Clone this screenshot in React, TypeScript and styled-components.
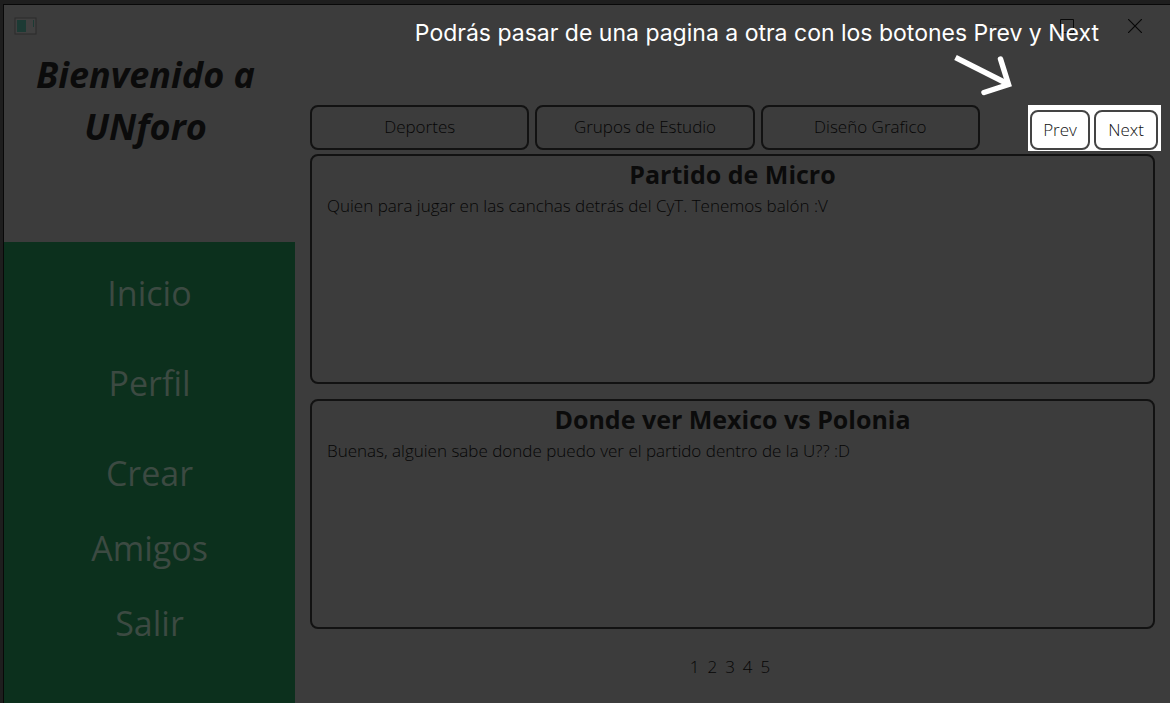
import React from "react";
import styled, { createGlobalStyle } from "styled-components";

const color = {
  frame: "#1e1e1e",
  edge: "#080808",
  window: "#3c3c3c",
  green: "#0c301d",
  line: "#121212",
  text: "#060606",
  title: "#0b0b0b",
  navText: "#3c4a42",
};

const GlobalStyle = createGlobalStyle`
  * { box-sizing: border-box; }
  body {
    margin: 0;
    background: ${color.frame};
    color: ${color.text};
    font-family: "Open Sans", "Noto Sans", sans-serif;
    font-size: 17px;
    font-weight: 300;
  }
  button { font: inherit; color: inherit; cursor: pointer; }
  h1, h2, p, ul, ol { margin: 0; padding: 0; }
  ul, ol { list-style: none; }
`;

const Page = styled.div`
  position: relative;
  display: flex;
  min-height: 100vh;
  padding: 4px 0 0 3px;
`;

const Window = styled.div`
  flex: 1;
  display: flex;
  flex-direction: column;
  background: ${color.window};
  border-top: 1px solid ${color.edge};
  border-left: 1px solid ${color.edge};
`;

const TitleBar = styled.header`
  display: flex;
  justify-content: space-between;
  align-items: center;
  height: 42px;
  padding: 0 28px 0 10px;
`;

const Controls = styled.div`
  display: flex;
  gap: 54px;
`;

const ControlButton = styled.button`
  display: flex;
  padding: 0;
  border: 0;
  background: none;
`;

const Content = styled.div`
  flex: 1;
  display: grid;
  grid-template-columns: 291px 1fr;
`;

const Sidebar = styled.aside`
  display: flex;
  flex-direction: column;
`;

const Welcome = styled.h1`
  height: 195px;
  padding: 2px 38px 0 30px;
  font-size: 36px;
  line-height: 52px;
  font-style: italic;
  font-weight: 700;
  text-align: center;
  color: ${color.title};
`;

const Nav = styled.nav`
  flex: 1;
  display: flex;
  flex-direction: column;
  gap: 38px;
  padding: 25px 0;
  background: ${color.green};
`;

const NavGroup = styled.ul<{ $gap: number }>`
  display: flex;
  flex-direction: column;
  align-items: center;
  gap: ${(p) => p.$gap}px;
`;

const NavLink = styled.a`
  display: block;
  font-size: 34px;
  font-weight: 400;
  line-height: 52px;
  color: ${color.navText};
  text-decoration: none;
`;

const Main = styled.main`
  display: flex;
  flex-direction: column;
  padding: 58px 15px 20px;
`;

const Toolbar = styled.div`
  display: flex;
  gap: 48px;
  margin-right: -6px;
`;

const Topics = styled.div`
  flex: 1;
  display: flex;
  gap: 6px;
  height: 45px;
`;

const OutlineButton = styled.button`
  padding: 0 0 2px;
  background: none;
  border: 2px solid ${color.line};
  border-radius: 8px;
`;

const TopicButton = styled(OutlineButton)`
  flex: 1;
`;

const Pager = styled.div`
  display: flex;
  gap: 4px;
  height: 46px;
  padding: 5px 3px 1px 2px;
  background: #fff;
  color: #111;
`;

const PagerButton = styled(OutlineButton)<{ $width: number }>`
  width: ${(p) => p.$width}px;
  border-color: #444;
`;

const Posts = styled.div`
  display: flex;
  flex-direction: column;
  gap: 15px;
  margin-top: 3px;
`;

const Post = styled.article`
  min-height: 230px;
  padding: 0 15px;
  border: 2px solid ${color.line};
  border-radius: 8px;
`;

const PostTitle = styled.h2`
  font-size: 25px;
  line-height: 36px;
  font-weight: 700;
  text-align: center;
  color: ${color.title};
`;

const PostText = styled.p`
  line-height: 28px;
`;

const PageNumbers = styled.ol`
  display: flex;
  justify-content: center;
  gap: 8px;
  margin-top: 25px;
  padding-right: 5px;
  line-height: 26px;
`;

const Callout = styled.div`
  position: absolute;
  top: 18px;
  right: 71px;
  display: flex;
  flex-direction: column;
  align-items: flex-end;
  gap: 5px;
  color: #fff;
  font-family: Inter, sans-serif;
  font-size: 23px;
  font-weight: 400;
  line-height: 31px;
  white-space: nowrap;
  pointer-events: none;
`;

const Arrow = styled.svg`
  margin-right: 83px;
`;

const primaryLinks = ["Inicio", "Perfil"];
const secondaryLinks = ["Crear", "Amigos", "Salir"];
const topics = ["Deportes", "Grupos de Estudio", "Diseño Grafico"];
const posts = [
  {
    title: "Partido de Micro",
    text: "Quien para jugar en las canchas detrás del CyT. Tenemos balón :V",
  },
  {
    title: "Donde ver Mexico vs Polonia",
    text: "Buenas, alguien sabe donde puedo ver el partido dentro de la U?? :D",
  },
];

function Links({ names, gap }: { names: string[]; gap: number }) {
  return (
    <NavGroup $gap={gap}>
      {names.map((name) => (
        <li key={name}>
          <NavLink href={`#${name.toLowerCase()}`}>{name}</NavLink>
        </li>
      ))}
    </NavGroup>
  );
}

export default function App() {
  return (
    <>
      <GlobalStyle />
      <Page>
        <Window>
          <TitleBar>
            <svg width="24" height="20" viewBox="0 0 24 20" aria-hidden="true">
              <rect x="1" y="2" width="21" height="16" fill="#404040" stroke="#2b2b2b" />
              <rect x="3" y="4" width="9" height="12" fill="#1c3a34" />
              <path d="M19.5 4v7" stroke="#1c3a34" />
            </svg>
            <Controls>
              <ControlButton aria-label="Minimizar">
                <svg width="14" height="14" viewBox="0 0 14 14">
                  <path d="M0 6.5h14" stroke="#303030" />
                </svg>
              </ControlButton>
              <ControlButton aria-label="Maximizar">
                <svg width="14" height="14" viewBox="0 0 14 14">
                  <path d="M.5.5h13v13H.5z" fill="none" stroke="#080808" />
                </svg>
              </ControlButton>
              <ControlButton aria-label="Cerrar">
                <svg width="14" height="14" viewBox="0 0 14 14">
                  <path d="M0 0l14 14M14 0L0 14" stroke="#080808" strokeWidth="1.2" />
                </svg>
              </ControlButton>
            </Controls>
          </TitleBar>
          <Content>
            <Sidebar>
              <Welcome>Bienvenido a UNforo</Welcome>
              <Nav aria-label="Principal">
                <Links names={primaryLinks} gap={38} />
                <Links names={secondaryLinks} gap={23} />
              </Nav>
            </Sidebar>
            <Main>
              <Toolbar>
                <Topics>
                  {topics.map((topic) => (
                    <TopicButton key={topic}>{topic}</TopicButton>
                  ))}
                </Topics>
                <Pager>
                  <PagerButton $width={60}>Prev</PagerButton>
                  <PagerButton $width={64}>Next</PagerButton>
                </Pager>
              </Toolbar>
              <Posts>
                {posts.map((post) => (
                  <Post key={post.title}>
                    <PostTitle>{post.title}</PostTitle>
                    <PostText>{post.text}</PostText>
                  </Post>
                ))}
              </Posts>
              <PageNumbers>
                {[1, 2, 3, 4, 5].map((n) => (
                  <li key={n}>{n}</li>
                ))}
              </PageNumbers>
            </Main>
          </Content>
        </Window>
        <Callout>
          <span>Podrás pasar de una pagina a otra con los botones Prev y Next</span>
          <Arrow width="62" height="44" viewBox="0 0 62 44" aria-hidden="true">
            <path d="M1.5 3.5L55 30.5" fill="none" stroke="#fff" strokeWidth="5.5" />
            <path
              d="M46.5 5L54.5 30.5L30 38.5"
              fill="none"
              stroke="#fff"
              strokeWidth="5.5"
              strokeLinecap="round"
              strokeLinejoin="miter"
            />
          </Arrow>
        </Callout>
      </Page>
    </>
  );
}
